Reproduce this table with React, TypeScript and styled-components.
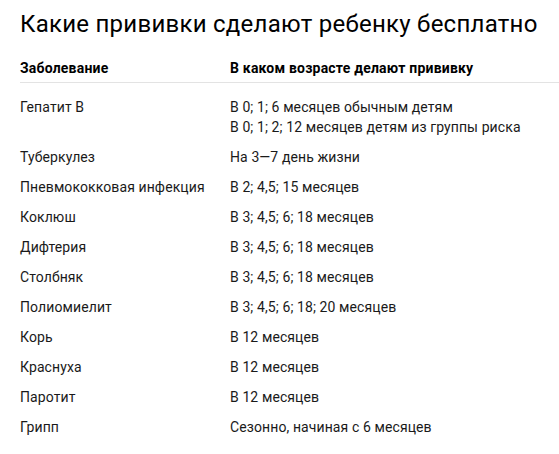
import { Fragment } from 'react';
import styled, { createGlobalStyle } from 'styled-components';

const GlobalStyle = createGlobalStyle`
  html, body {
    margin: 0;
    padding: 0;
    background: #fff;
  }
  body {
    font-family: Roboto, "Liberation Sans", Arial, sans-serif;
    color: #000;
  }
`;

const Page = styled.div`
  padding: 10px 0 0 20px;
`;

const Title = styled.h2`
  font-size: 24px;
  font-weight: 400;
  line-height: 28px;
  letter-spacing: 0.25px;
  margin: 0 0 20px;
  color: #000;
`;

const Table = styled.div`
  display: grid;
  grid-template-columns: 210px 1fr;
`;

const HeadCell = styled.div`
  font-size: 14px;
  font-weight: 700;
  line-height: 20px;
  letter-spacing: 0.2px;
  padding-bottom: 4px;
  border-bottom: 1px solid #e3e3e3;
`;

const Cell = styled.div<{ $first?: boolean }>`
  font-size: 14px;
  line-height: 20px;
  letter-spacing: 0.1px;
  color: #1a1a1a;
  padding: ${(p) => (p.$first ? '14px' : '5px')} 0 5px;
`;

const rows: [string, string[]][] = [
  ['Гепатит В', ['В 0; 1; 6 месяцев обычным детям', 'В 0; 1; 2; 12 месяцев детям из группы риска']],
  ['Туберкулез', ['На 3—7 день жизни']],
  ['Пневмококковая инфекция', ['В 2; 4,5; 15 месяцев']],
  ['Коклюш', ['В 3; 4,5; 6; 18 месяцев']],
  ['Дифтерия', ['В 3; 4,5; 6; 18 месяцев']],
  ['Столбняк', ['В 3; 4,5; 6; 18 месяцев']],
  ['Полиомиелит', ['В 3; 4,5; 6; 18; 20 месяцев']],
  ['Корь', ['В 12 месяцев']],
  ['Краснуха', ['В 12 месяцев']],
  ['Паротит', ['В 12 месяцев']],
  ['Грипп', ['Сезонно, начиная с 6 месяцев']],
];

export default function App() {
  return (
    <>
      <GlobalStyle />
      <Page>
        <Title>Какие прививки сделают ребенку бесплатно</Title>
        <Table>
          <HeadCell>Заболевание</HeadCell>
          <HeadCell>В каком возрасте делают прививку</HeadCell>
          {rows.map(([name, ages], i) => (
            <Fragment key={name}>
              <Cell $first={i === 0}>{name}</Cell>
              <Cell $first={i === 0}>
                {ages.map((a) => (
                  <div key={a}>{a}</div>
                ))}
              </Cell>
            </Fragment>
          ))}
        </Table>
      </Page>
    </>
  );
}
